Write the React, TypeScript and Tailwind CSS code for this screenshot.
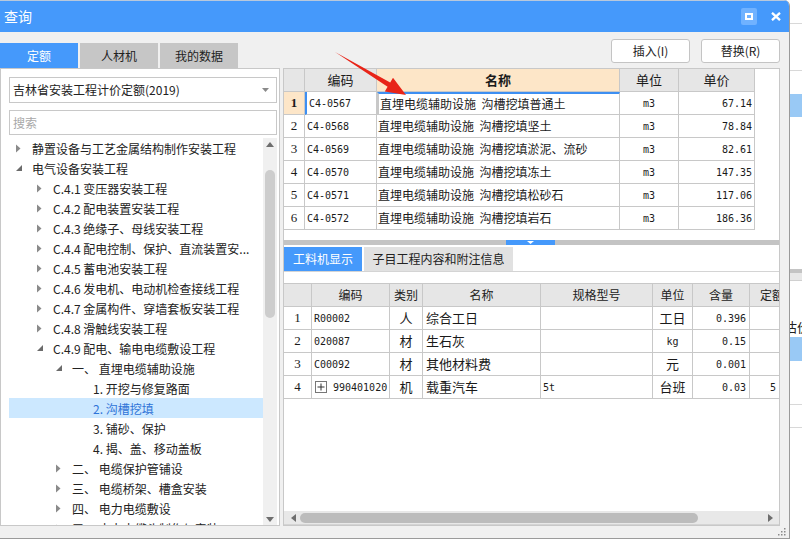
import React from "react";

type TNode = { level: number; exp?: boolean; leaf?: boolean; label: string; sel?: boolean };

const tree: TNode[] = [
  { level: 0, label: "静置设备与工艺金属结构制作安装工程" },
  { level: 0, exp: true, label: "电气设备安装工程" },
  { level: 1, label: "C.4.1 变压器安装工程" },
  { level: 1, label: "C.4.2 配电装置安装工程" },
  { level: 1, label: "C.4.3 绝缘子、母线安装工程" },
  { level: 1, label: "C.4.4 配电控制、保护、直流装置安..." },
  { level: 1, label: "C.4.5 蓄电池安装工程" },
  { level: 1, label: "C.4.6 发电机、电动机检查接线工程" },
  { level: 1, label: "C.4.7 金属构件、穿墙套板安装工程" },
  { level: 1, label: "C.4.8 滑触线安装工程" },
  { level: 1, exp: true, label: "C.4.9 配电、输电电缆敷设工程" },
  { level: 2, exp: true, label: "一、 直埋电缆辅助设施" },
  { level: 3, leaf: true, label: "1. 开挖与修复路面" },
  { level: 3, leaf: true, label: "2. 沟槽挖填", sel: true },
  { level: 3, leaf: true, label: "3. 铺砂、保护" },
  { level: 3, leaf: true, label: "4. 揭、盖、移动盖板" },
  { level: 2, label: "二、 电缆保护管铺设" },
  { level: 2, label: "三、 电缆桥架、槽盒安装" },
  { level: 2, label: "四、 电力电缆敷设" },
  { level: 2, label: "五、 电力电缆头制作与安装" },
];

const indent = ["pl-[6px]", "pl-[27px]", "pl-[46px]", "pl-[67px]"];

const topRows = [
  ["C4-0567", "直埋电缆辅助设施\u00a0\u00a0沟槽挖填普通土", "m3", "67.14"],
  ["C4-0568", "直埋电缆辅助设施\u00a0\u00a0沟槽挖填坚土", "m3", "78.84"],
  ["C4-0569", "直埋电缆辅助设施\u00a0\u00a0沟槽挖填淤泥、流砂", "m3", "82.61"],
  ["C4-0570", "直埋电缆辅助设施\u00a0\u00a0沟槽挖填冻土", "m3", "147.35"],
  ["C4-0571", "直埋电缆辅助设施\u00a0\u00a0沟槽挖填松砂石", "m3", "117.06"],
  ["C4-0572", "直埋电缆辅助设施\u00a0\u00a0沟槽挖填岩石", "m3", "186.36"],
];

const lowRows = [
  { n: "1", code: "R00002", cat: "人", name: "综合工日", spec: "", unit: "工日", unitMono: false, qty: "0.396", price: "" },
  { n: "2", code: "020087", cat: "材", name: "生石灰", spec: "", unit: "kg", unitMono: true, qty: "0.15", price: "" },
  { n: "3", code: "C00092", cat: "材", name: "其他材料费", spec: "", unit: "元", unitMono: false, qty: "0.001", price: "" },
  { n: "4", code: "990401020", plus: true, cat: "机", name: "载重汽车", spec: "5t", unit: "台班", unitMono: false, qty: "0.03", price: "5" },
];

const MONO = "font-[family-name:'DejaVu_Sans_Mono',monospace] text-[10px]";
const SERIF = "font-[family-name:'Liberation_Serif',serif] text-[13px]";

function Tri({ exp }: { exp?: boolean }) {
  return exp ? (
    <svg width="7" height="7" viewBox="0 0 7 7">
      <polygon points="6,0 6,6 0,6" fill="#6b6b6b" />
    </svg>
  ) : (
    <svg width="5" height="9" viewBox="0 0 5 9">
      <polygon points="0,0.5 4.5,4.5 0,8.5" fill="#8a8a8a" />
    </svg>
  );
}

function TitleBar() {
  return (
    <div className="h-[32px] shrink-0 bg-[#4599fb] border-t border-[#b8c8dc] flex items-center pl-[4px] pr-[8px] text-white text-[14px]">
      <span>查询</span>
      <div className="ml-auto flex items-center gap-[14px]">
        <div className="w-[16px] h-[17px] bg-[#70b2ff] rounded-[2px] flex items-center justify-center">
          <div className="w-[8px] h-[7px] border-2 border-white" />
        </div>
        <svg width="10" height="9" viewBox="0 0 10 9">
          <path d="M1 0.8 L9 8.2 M9 0.8 L1 8.2" stroke="#fff" strokeWidth="2.3" />
        </svg>
      </div>
    </div>
  );
}

function TabRow() {
  return (
    <div className="h-[36px] shrink-0 flex justify-between">
      <div className="flex items-end gap-[2px]">
        <div className="w-[78px] h-[25px] bg-[#4599fb] text-white flex items-center justify-center">定额</div>
        <div className="w-[78px] h-[25px] bg-[#c6c6c6] text-[#222] flex items-center justify-center">人材机</div>
        <div className="w-[78px] h-[25px] bg-[#c6c6c6] text-[#222] flex items-center justify-center">我的数据</div>
      </div>
      <div className="flex gap-[11px] mt-[7px] mr-[9px] h-[24px]">
        <div className="w-[79px] h-[24px] bg-white border border-[#c4c4c4] rounded-[3px] flex items-center justify-center text-[#222]">插入(I)</div>
        <div className="w-[79px] h-[24px] bg-white border border-[#c4c4c4] rounded-[3px] flex items-center justify-center text-[#222]">替换(R)</div>
      </div>
    </div>
  );
}

function LeftPanel() {
  return (
    <div className="w-[280px] h-[458px] bg-white border border-[#c8c8c8] flex flex-col pt-[8px] pl-[8px] pr-[2px]">
      <div className="h-[26px] shrink-0 border border-[#c8c8c8] flex items-center pl-[3px] pr-[7px] text-[#222]">
        <span>吉林省安装工程计价定额(2019)</span>
        <svg className="ml-auto" width="7" height="4" viewBox="0 0 7 4">
          <polygon points="0,0 7,0 3.5,4" fill="#8a8a8a" />
        </svg>
      </div>
      <div className="h-[25px] shrink-0 mt-[7px] border border-[#c8c8c8] flex items-center pl-[3px] text-[#a8a8a8]">搜索</div>
      <div className="mt-[3px] flex-1 min-h-0 flex overflow-hidden">
        <div className="w-[254px] overflow-hidden">
          {tree.map((n, i) => (
            <div
              key={i}
              className={`h-[20px] flex items-center whitespace-nowrap ${indent[n.level]} ${n.sel ? "bg-[#cce8ff] text-[#2f74d8]" : "text-[#222]"}`}
            >
              <div className="w-[17px] shrink-0 flex items-center pl-[1px] pt-[1px]">{n.leaf ? null : <Tri exp={n.exp} />}</div>
              <span className="pt-[2px]">{n.label}</span>
            </div>
          ))}
        </div>
        <div className="w-[14px] bg-[#f0f0f0] flex flex-col items-center">
          <svg className="mt-[4px]" width="8" height="5" viewBox="0 0 8 5">
            <polygon points="4,0 8,5 0,5" fill="#6e6e6e" />
          </svg>
          <div className="mt-[23px] w-[10px] h-[148px] rounded-full bg-[#cdcdcd]" />
          <div className="flex-1" />
          <svg className="mb-[3px]" width="8" height="5" viewBox="0 0 8 5">
            <polygon points="0,0 8,0 4,5" fill="#6e6e6e" />
          </svg>
        </div>
      </div>
    </div>
  );
}

function TopGrid() {
  return (
    <div className="w-[471px] text-[#1a1a1a]">
      <div className="flex h-[23px] bg-[#e6e6e6] text-[13px]">
        <div className="w-[21px] border-r border-b border-[#c8c8c8]" />
        <div className="w-[72px] border-r border-b border-[#c8c8c8] flex items-center justify-center">编码</div>
        <div className="w-[243px] border-r border-b border-[#c8c8c8] bg-[#fde6c8] flex items-center justify-center font-bold">名称</div>
        <div className="w-[59px] border-r border-b border-[#c8c8c8] flex items-center justify-center">单位</div>
        <div className="w-[76px] border-r border-b border-[#c8c8c8] flex items-center justify-center">单价</div>
      </div>
      {topRows.map((r, i) => (
        <div key={i} className="flex h-[23px]">
          <div className={`w-[21px] border-r border-b border-[#c8c8c8] flex items-center justify-center ${SERIF} ${i === 0 ? "bg-[#fde6c8] font-bold" : ""}`}>{i + 1}</div>
          <div className={`w-[72px] border-r border-b border-[#c8c8c8] flex items-center pl-[2px] ${MONO} ${i === 0 ? "border-l-2 border-l-[#3d8ff2]" : ""}`}>{r[0]}</div>
          <div className={`w-[243px] border-b border-r border-[#c8c8c8] flex items-center pl-[1px] whitespace-nowrap overflow-hidden ${i === 0 ? "border-2 border-[#6e6e6e] border-t-[#3d8ff2]" : ""}`}>{r[1]}</div>
          <div className={`w-[59px] border-r border-b border-[#c8c8c8] flex items-center justify-center ${MONO}`}>{r[2]}</div>
          <div className={`w-[76px] border-r border-b border-[#c8c8c8] flex items-center justify-end pr-[2px] ${MONO}`}>{r[3]}</div>
        </div>
      ))}
    </div>
  );
}

function LowerGrid() {
  const c = "border-r border-b border-[#c8c8c8] flex items-center shrink-0";
  return (
    <div className="flex-1 min-h-0 flex flex-col border-t border-[#c8c8c8] overflow-hidden">
      <div className="flex h-[23px] bg-[#e6e6e6] text-[#222] shrink-0">
        <div className={`${c} w-[28px]`} />
        <div className={`${c} w-[78px] justify-center`}>编码</div>
        <div className={`${c} w-[33px] justify-center`}>类别</div>
        <div className={`${c} w-[118px] justify-center`}>名称</div>
        <div className={`${c} w-[112px] justify-center`}>规格型号</div>
        <div className={`${c} w-[40px] justify-center`}>单位</div>
        <div className={`${c} w-[57px] justify-center`}>含量</div>
        <div className={`${c} w-[60px] pl-[10px] whitespace-nowrap`}>定额</div>
      </div>
      {lowRows.map((r) => (
        <div key={r.n} className="flex h-[23px] shrink-0 text-[#1a1a1a]">
          <div className={`${c} w-[28px] justify-center ${SERIF}`}>{r.n}</div>
          <div className={`${c} w-[78px] pl-[2px] ${MONO}`}>
            {r.plus ? (
              <>
                <div className="w-[12px] h-[12px] border border-[#777] ml-[1px] mr-[6px] flex items-center justify-center">
                  <svg width="8" height="8" viewBox="0 0 8 8">
                    <path d="M4 0.5 V7.5 M0.5 4 H7.5" stroke="#333" strokeWidth="1" />
                  </svg>
                </div>
                <span>{r.code}</span>
              </>
            ) : (
              r.code
            )}
          </div>
          <div className={`${c} w-[33px] justify-center text-[13px]`}>{r.cat}</div>
          <div className={`${c} w-[118px] pl-[3px] text-[13px]`}>{r.name}</div>
          <div className={`${c} w-[112px] pl-[2px] ${MONO}`}>{r.spec}</div>
          <div className={`${c} w-[40px] justify-center ${r.unitMono ? MONO : "text-[13px]"}`}>{r.unit}</div>
          <div className={`${c} w-[57px] justify-end pr-[3px] ${MONO}`}>{r.qty}</div>
          <div className={`${c} w-[60px] pl-[20px] ${MONO}`}>{r.price}</div>
        </div>
      ))}
      <div className="flex-1" />
      <div className="h-[13px] shrink-0 bg-[#e8e8e8] flex items-center">
        <svg className="ml-[7px]" width="5" height="8" viewBox="0 0 5 8">
          <polygon points="5,0 5,8 0,4" fill="#6e6e6e" />
        </svg>
        <div className="ml-[4px] w-[398px] h-[10px] rounded-full bg-[#bcbcbc]" />
        <div className="flex-1" />
        <svg className="mr-[6px]" width="5" height="8" viewBox="0 0 5 8">
          <polygon points="0,0 0,8 5,4" fill="#6e6e6e" />
        </svg>
      </div>
      <div className="h-[1px] shrink-0 bg-[#d4d4d4]" />
    </div>
  );
}

function RightPanel() {
  return (
    <div className="w-[497px] h-[458px] bg-white border border-[#c8c8c8] flex flex-col">
      <div className="h-[171px] shrink-0">
        <TopGrid />
      </div>
      <div className="h-[5px] shrink-0 bg-[#c4c4c4] flex">
        <div className="ml-[222px] w-[49px] h-[5px] bg-[#4599fb] flex justify-center">
          <svg width="7" height="4" viewBox="0 0 7 4">
            <polygon points="0,1 7,1 3.5,4" fill="#fff" />
          </svg>
        </div>
      </div>
      <div className="flex-1 min-h-0 flex flex-col pt-[2px]">
        <div className="h-[25px] shrink-0 flex gap-[2px] border-b border-[#d4d4d4]">
          <div className="w-[78px] h-[24px] bg-[#4599fb] text-white flex items-center justify-center">工料机显示</div>
          <div className="w-[149px] h-[24px] bg-[#e1e1e1] text-[#222] flex items-center justify-center">子目工程内容和附注信息</div>
        </div>
        <div className="h-[11px] shrink-0" />
        <LowerGrid />
      </div>
    </div>
  );
}

function Dialog() {
  return (
    <div className="w-[790px] h-[539px] shrink-0 flex flex-col bg-[#f0f0f0] border-r border-b border-[#9a9a9a] rounded-tr-[6px] overflow-hidden">
      <TitleBar />
      <TabRow />
      <div className="flex h-[458px] shrink-0">
        <LeftPanel />
        <div className="w-[3px]" />
        <RightPanel />
      </div>
      <div className="flex-1 flex justify-end items-end pr-[3px] pb-[2px]">
        <svg width="8" height="8" viewBox="0 0 8 8">
          <rect x="6" y="0" width="1.5" height="1.5" fill="#8a8a8a" />
          <rect x="3" y="3" width="1.5" height="1.5" fill="#8a8a8a" />
          <rect x="6" y="3" width="1.5" height="1.5" fill="#8a8a8a" />
          <rect x="0" y="6" width="1.5" height="1.5" fill="#8a8a8a" />
          <rect x="3" y="6" width="1.5" height="1.5" fill="#8a8a8a" />
          <rect x="6" y="6" width="1.5" height="1.5" fill="#8a8a8a" />
        </svg>
      </div>
    </div>
  );
}

function OutsideStrip() {
  return (
    <div className="w-[12px] h-[549px] shrink-0 bg-white flex flex-col overflow-hidden">
      <div className="h-[24px] shrink-0 border-b border-[#d8d8d8]" />
      <div className="h-[47px] shrink-0 border-b border-[#d8d8d8]" />
      <div className="h-[23px] shrink-0" />
      <div className="h-[23px] shrink-0 bg-[#99c9f5]" />
      <div className="h-[152px] shrink-0" />
      <div className="h-[4px] shrink-0 bg-[#c4c4c4]" />
      <div className="h-[8px] shrink-0 bg-[#e8e8e8] border-b border-[#d0d0d0]" />
      <div className="h-[36px] shrink-0" />
      <div className="h-[20px] shrink-0 whitespace-nowrap ml-[-6px] text-[13px] text-[#222] leading-[20px]">估价</div>
      <div className="h-[24px] shrink-0 bg-[#99c9f5]" />
      <div className="h-[44px] shrink-0 border-b border-[#d8d8d8]" />
      <div className="h-[23px] shrink-0 border-b border-[#d8d8d8]" />
    </div>
  );
}

function Arrow() {
  return (
    <svg className="absolute left-0 top-0 pointer-events-none" width="802" height="549" viewBox="0 0 802 549">
      <polygon points="335,52 390.2,82.5 393,77.8 406,95 384.8,91.4 387.6,86.7" fill="#e82418" />
    </svg>
  );
}

export default function App() {
  return (
    <div className="relative w-[802px] h-[549px] overflow-hidden bg-white font-[family-name:'Noto_Sans_CJK_SC',sans-serif] text-[12px] text-[#1f1f1f]">
      <div className="flex h-[549px] items-start">
        <Dialog />
        <OutsideStrip />
      </div>
      <Arrow />
    </div>
  );
}
